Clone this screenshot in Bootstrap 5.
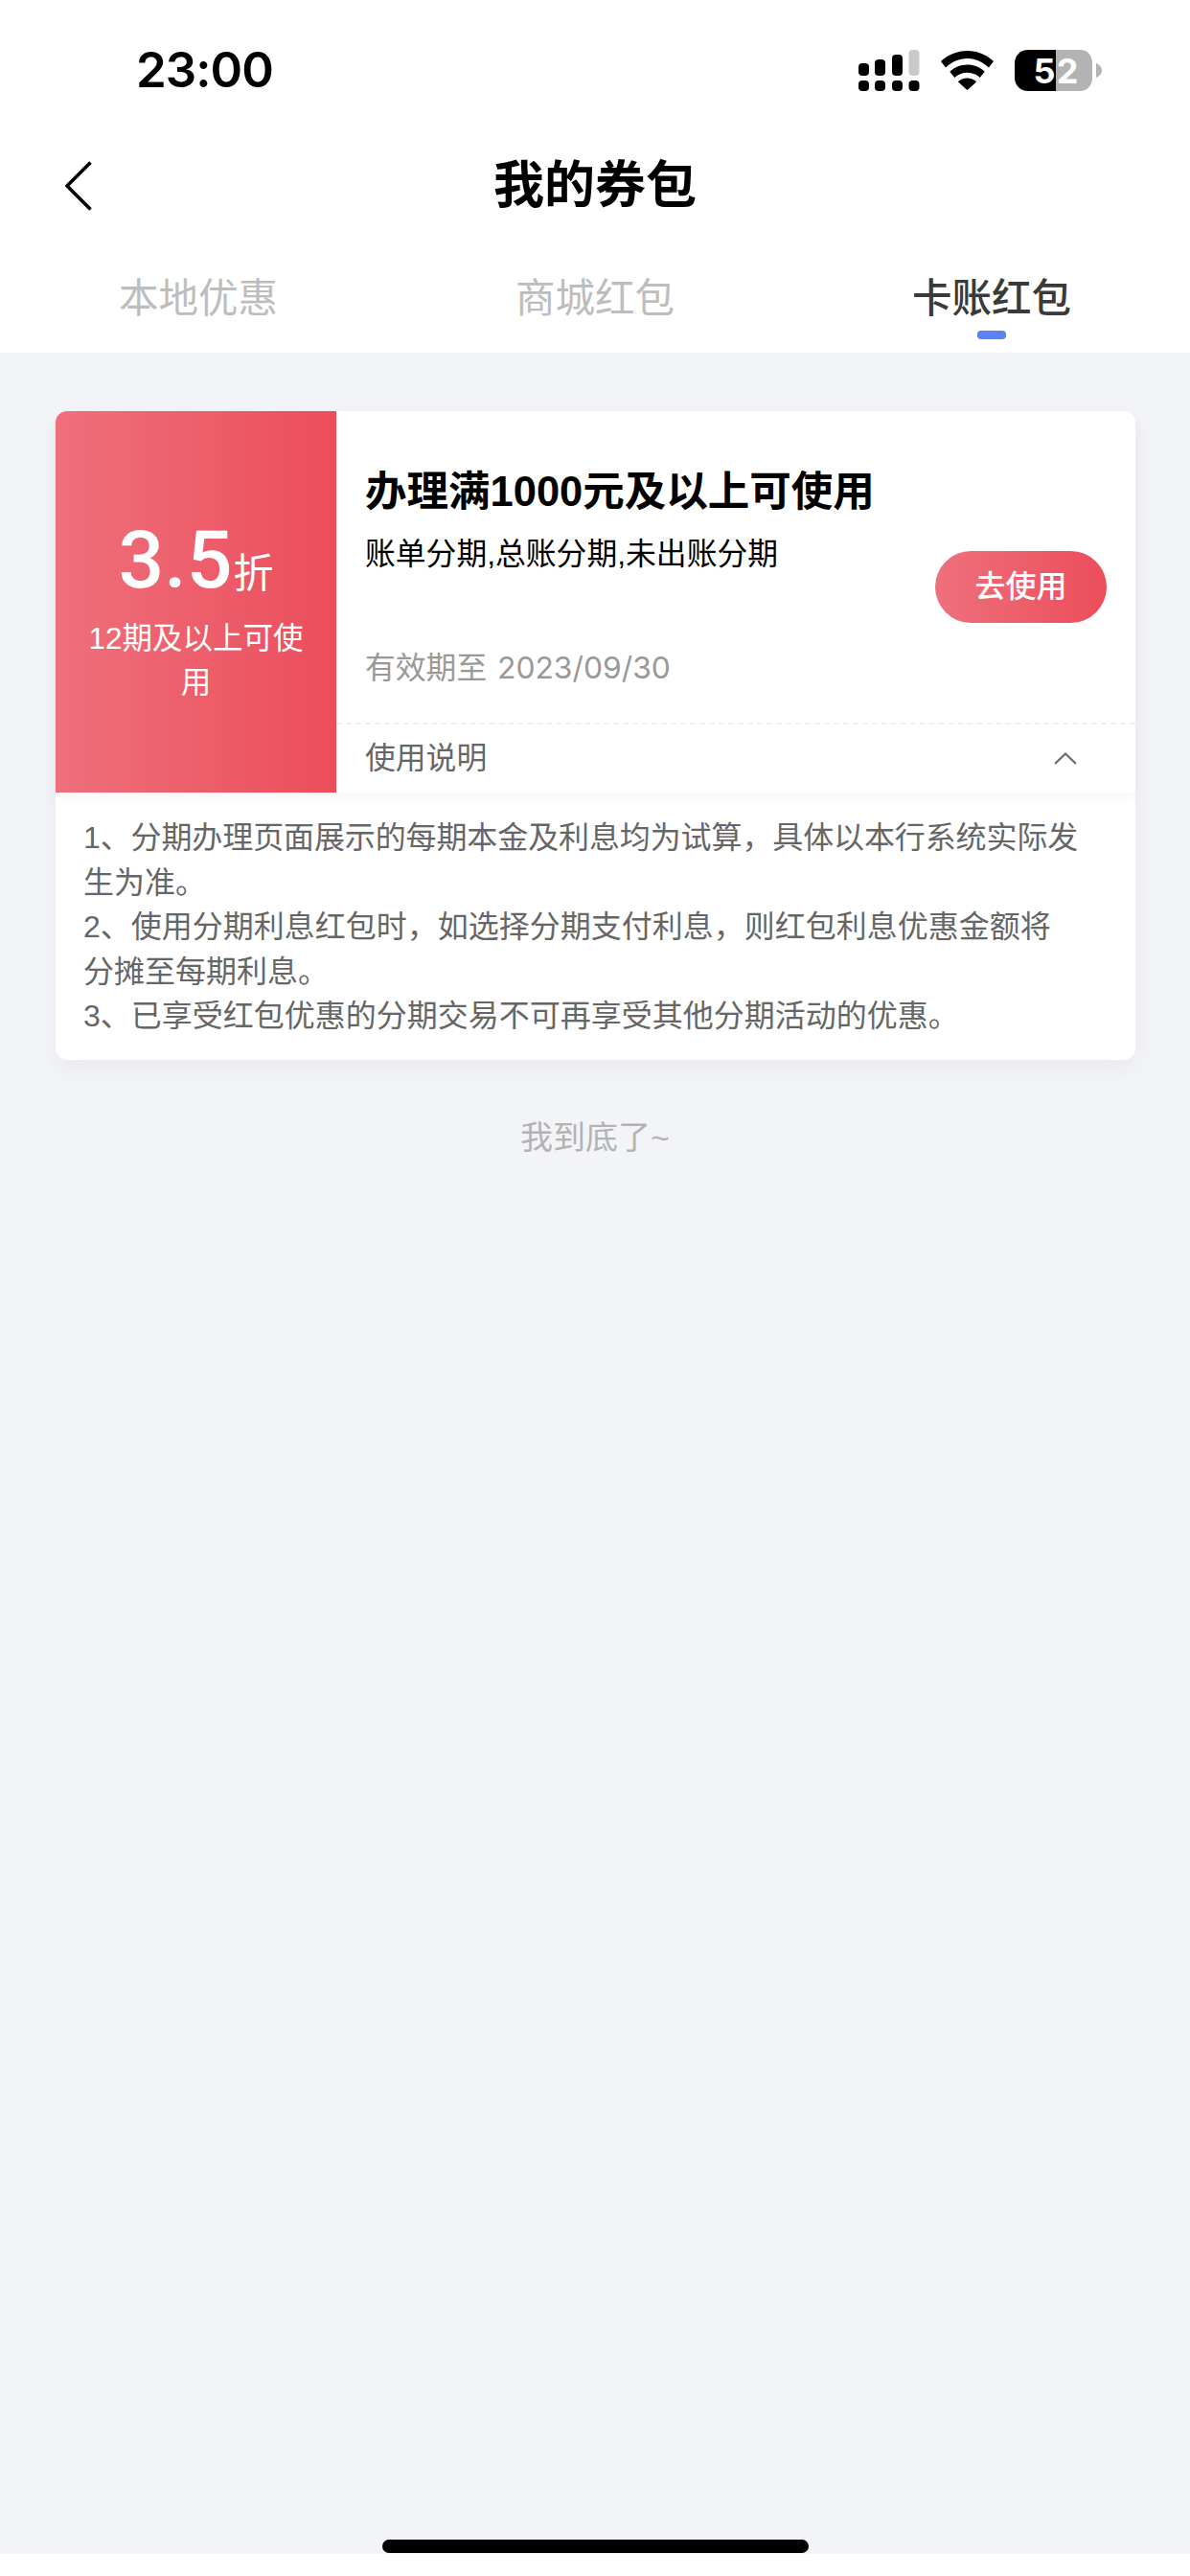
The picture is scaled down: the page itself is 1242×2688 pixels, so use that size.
<!DOCTYPE html>
<html lang="zh-CN">
<head>
<meta charset="utf-8">
<title>我的券包</title>
<link href="https://cdn.jsdelivr.net/npm/bootstrap@5.3.0/dist/css/bootstrap.min.css" rel="stylesheet">
<style>
html,body{margin:0;padding:0}
body{width:1242px;height:2688px;background:#f3f4f8;font-family:"Liberation Sans","Noto Sans CJK SC",sans-serif;color:#000;overflow:hidden}
.app-shell{height:2688px}
.top-area{height:368px}
.status-row{height:148px;padding:0 92px 2px 142px}
.clock{font-family:Inter,"Liberation Sans",sans-serif;font-weight:600;font-size:51px;line-height:1;letter-spacing:-1px;margin-bottom:2px}
.status-icons{gap:22px}
.nav-row{height:92px}
.nav-side{width:140px;padding-left:68px}
.nav-title{font-size:53px;font-weight:700;line-height:60px}
.tab-row{height:128px}
.tab-item{padding-top:42px;font-size:41.500px;line-height:60px;color:#bdbdbd}
.tab-item.is-on{color:#3a3a3a;font-weight:500}
.tab-mark{display:block;width:30px;height:9px;margin:3px auto 0;border-radius:4px;background:#5b82f5}
.coupon{margin:61px 57px 0 58px;border-radius:12px;box-shadow:0 10px 24px rgba(40,50,90,.05);background:#fff}
.coupon-top{height:398px;position:relative;border-radius:12px 12px 0 0;box-shadow:0 6px 14px rgba(0,0,0,.035);background:#fff}
.rate-panel{width:293px;border-radius:12px 0 0 0;background:linear-gradient(90deg,#ee707c,#ec4d5b);color:#fff;padding:19px 22px 0}
.rate-value{font-family:Roboto,"Noto Sans CJK SC",sans-serif;font-size:84px;line-height:90px;font-weight:500}
.rate-unit{font-family:"Noto Sans CJK SC",sans-serif;font-weight:400;font-size:42px;margin-left:1px}
.rate-desc{font-size:31.500px;line-height:46px;margin-top:3px}
.coupon-body{height:327px;padding:54px 30px 34px 30px;border-bottom:2px dashed #eef0f6}
.coupon-title{font-size:43.500px;line-height:60px;font-weight:700;white-space:nowrap}
.coupon-sub{font-size:31.800px;line-height:50px;margin-top:10px;white-space:nowrap}
.coupon-date{font-size:31.800px;line-height:50px;color:#999;margin-top:69px;white-space:nowrap}
.coupon-date .date-num{font-family:Inter,"Liberation Sans",sans-serif;margin-left:2px}
.use-btn{width:179px;height:75px;padding:0;border:0;border-radius:38px;background:linear-gradient(90deg,#ee707c,#ec4d5b);color:#fff;font-size:32px;font-weight:500;line-height:75px;margin-top:22px}
.rule-row{height:69px;padding:2px 61px 0 30px;font-size:31.800px;color:#666}
.rule-text{padding:24px 20px 22px 29px;font-size:32px;line-height:46.500px;color:#666;white-space:nowrap}
.rule-first{letter-spacing:-.11px}
.end-note{margin-top:56px;font-size:34px;line-height:50px;color:#b3b3b3}
.home-zone{padding-bottom:1px}
.home-bar{width:445px;height:14px;border-radius:7px;background:#000}
.safe-strip{height:23px;background:#fff}
</style>
</head>
<body>
<div class="app-shell d-flex flex-column">
  <header class="top-area bg-white">
    <div class="status-row d-flex justify-content-between align-items-center">
      <span class="clock">23:00</span>
      <div class="status-icons d-flex align-items-center">
        <svg width="64" height="43" viewBox="0 0 64 43" aria-hidden="true">
          <rect x="0" y="14" width="11" height="13" rx="4"/><rect x="17" y="10" width="11" height="17" rx="4"/><rect x="35" y="5" width="11" height="22" rx="4"/><rect x="52.500" y="0" width="11" height="27" rx="4" fill="#c9c9c9"/>
          <rect x="0" y="32" width="11" height="11" rx="4"/><rect x="17" y="32" width="11" height="11" rx="4"/><rect x="35" y="32" width="11" height="11" rx="4"/><rect x="52.500" y="32" width="11" height="11" rx="4"/>
        </svg>
        <svg width="55" height="41" viewBox="0 0 55 41" aria-hidden="true">
          <path d="M27.500 0C17 0 7.500 4 0 11l5 6.500C11.500 11.500 19 8 27.500 8S43.500 11.500 50 17.500l5-6.500C47.500 4 38 0 27.500 0Z"/>
          <path d="M27.500 14.500c-7 0-13.500 2.800-18.200 7.300l5 6.200c3.500-3.300 8.200-5.300 13.200-5.300s9.700 2 13.200 5.300l5-6.200c-4.700-4.500-11.200-7.300-18.200-7.300Z"/>
          <path d="M27.500 28.500c-3.800 0-7.200 1.500-9.700 3.800L27.500 41l9.700-8.700c-2.500-2.300-5.900-3.800-9.700-3.800Z"/>
        </svg>
        <svg width="91" height="43" viewBox="0 0 91 43" aria-hidden="true">
          <path d="M43 0H14C6 0 0 6 0 14v15c0 8 6 14 14 14h29Z"/>
          <path d="M43 0h25c8 0 13 6 13 14v15c0 8-5 14-13 14H43Z" fill="#b3b3b3"/>
          <path d="M85 14c3 1 6 4 6 7.500S88 28 85 29Z" fill="#b3b3b3"/>
          <text x="31" y="35" text-anchor="middle" font-family="Inter,Liberation Sans,sans-serif" font-size="36" font-weight="700" fill="#fff">5</text>
          <text x="55" y="35" text-anchor="middle" font-family="Inter,Liberation Sans,sans-serif" font-size="36" font-weight="700" fill="#fff">2</text>
        </svg>
      </div>
    </div>
    <div class="nav-row d-flex align-items-center">
      <div class="nav-side d-flex">
        <svg width="28" height="52" viewBox="0 0 28 52" aria-hidden="true"><path d="M26.500 1.500 2 26l24.500 24.500" fill="none" stroke="#000" stroke-width="3.600"/></svg>
      </div>
      <div class="nav-title flex-grow-1 text-center">我的券包</div>
      <div class="nav-side"></div>
    </div>
    <div class="tab-row row g-0 text-center">
      <div class="col-4 tab-item">本地优惠</div>
      <div class="col-4 tab-item">商城红包</div>
      <div class="col-4 tab-item is-on">卡账红包<span class="tab-mark"></span></div>
    </div>
  </header>

  <main class="flex-grow-1 d-flex flex-column">
    <section class="coupon">
      <div class="coupon-top d-flex">
        <div class="rate-panel d-flex flex-column justify-content-center text-center flex-shrink-0">
          <div class="rate-value">3.5<span class="rate-unit">折</span></div>
          <div class="rate-desc">12期及以上可使用</div>
        </div>
        <div class="flex-grow-1 d-flex flex-column">
          <div class="coupon-body d-flex justify-content-between align-items-center">
            <div class="align-self-start">
              <div class="coupon-title">办理满1000元及以上可使用</div>
              <div class="coupon-sub">账单分期,总账分期,未出账分期</div>
              <div class="coupon-date">有效期至 <span class="date-num">2023/09/30</span></div>
            </div>
            <button type="button" class="btn use-btn">去使用</button>
          </div>
          <div class="rule-row d-flex justify-content-between align-items-center">
            <span>使用说明</span>
            <svg width="24" height="13" viewBox="0 0 24 13" aria-hidden="true"><path d="M1 12 12 1.500 23 12" fill="none" stroke="#666" stroke-width="2"/></svg>
          </div>
        </div>
      </div>
      <div class="rule-text"><span class="rule-first">1、分期办理页面展示的每期本金及利息均为试算，具体以本行系统实际发</span><br>生为准。<br>2、使用分期利息红包时，如选择分期支付利息，则红包利息优惠金额将<br>分摊至每期利息。<br>3、已享受红包优惠的分期交易不可再享受其他分期活动的优惠。</div>
    </section>
    <div class="end-note text-center">我到底了~</div>
    <div class="home-zone mt-auto d-flex justify-content-center"><div class="home-bar"></div></div>
    <div class="safe-strip"></div>
  </main>
</div>
<script src="https://cdn.jsdelivr.net/npm/bootstrap@5.3.0/dist/js/bootstrap.bundle.min.js"></script>
</body>
</html>
